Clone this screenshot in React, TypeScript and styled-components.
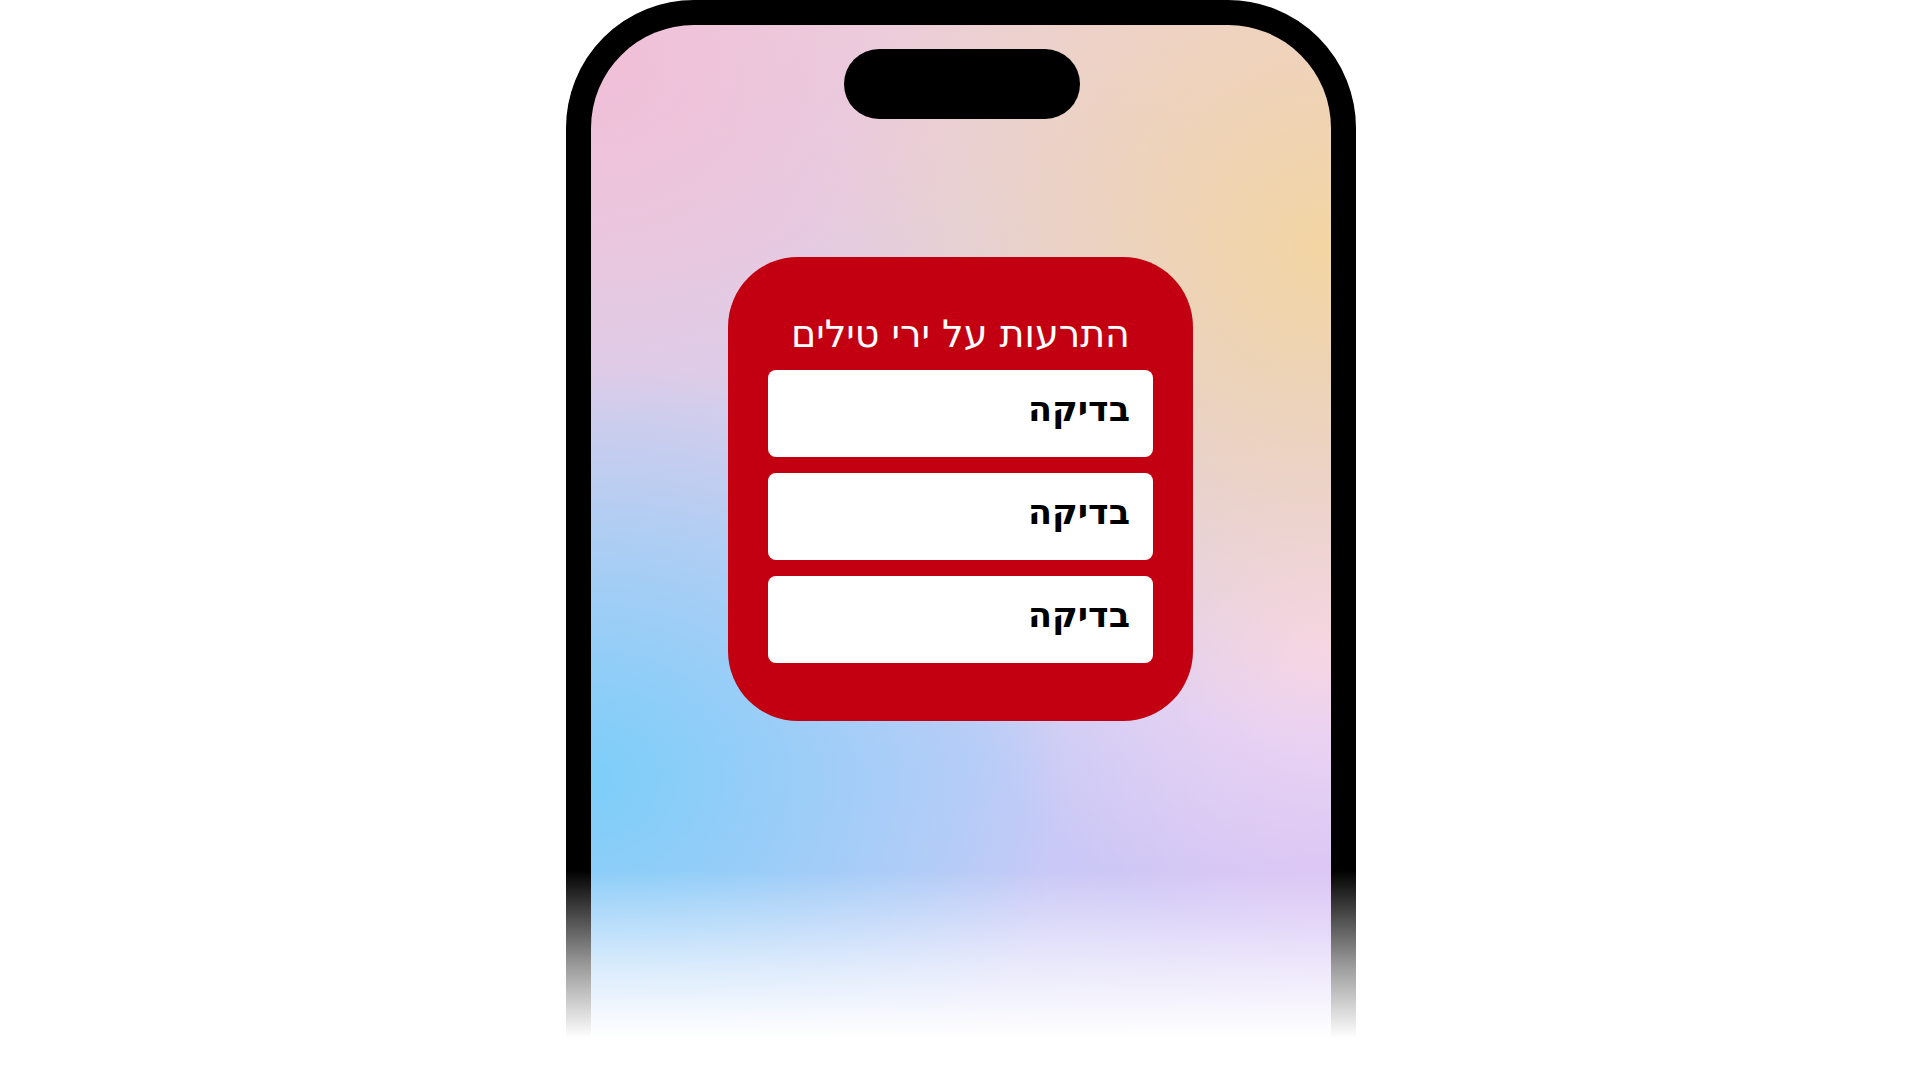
import React from "react";
import styled, { createGlobalStyle } from "styled-components";

const GlobalStyle = createGlobalStyle`
    html, body {
        margin: 0;
        padding: 0;
        height: 100%;
        overflow: hidden;
        background: #ffffff;
    }
    #root {
        height: 100%;
    }
`;

const alerts = ["בדיקה", "בדיקה", "בדיקה"];

const App: React.FC = () => {
    return (
        <>
            <GlobalStyle />
            <Page>
                <Phone>
                    <Screen>
                        <Island />
                        <AlertCard dir="rtl">
                            <Title>התרעות על ירי טילים</Title>
                            <AlertList>
                                {alerts.map((text, i) => (
                                    <AlertItem key={i}>{text}</AlertItem>
                                ))}
                            </AlertList>
                        </AlertCard>
                    </Screen>
                </Phone>
                <BottomFade />
            </Page>
        </>
    );
};

export default App;

const Page = styled.div`
    position: relative;
    height: 1080px;
    display: flex;
    justify-content: center;
    overflow: hidden;
    font-family: "DejaVu Sans", "Liberation Sans", sans-serif;
`;

const Phone = styled.div`
    flex: none;
    width: 790px;
    height: 1160px;
    margin-left: 1px;
    box-sizing: border-box;
    border: 25px solid #000;
    border-radius: 128px;
    background: #000;
`;

const Screen = styled.div`
    height: 100%;
    border-radius: 103px;
    display: flex;
    flex-direction: column;
    align-items: center;
    background:
        radial-gradient(70% 44% at 100% 20%, #f3d5a2 0%, rgba(243, 213, 162, 0) 100%),
        radial-gradient(55% 32% at 0% 4%, #f0bfd8 0%, rgba(240, 191, 216, 0) 100%),
        radial-gradient(64% 38% at 0% 68%, #7ccef9 0%, rgba(124, 206, 249, 0) 100%),
        radial-gradient(50% 26% at 100% 56%, #f8d6f0 0%, rgba(248, 214, 240, 0) 100%),
        radial-gradient(55% 28% at 100% 80%, #d6c1f5 0%, rgba(214, 193, 245, 0) 100%),
        linear-gradient(180deg, #ebd0de 0%, #d9cdec 38%, #c3cdf7 66%, #c6c8f6 100%);
`;

const Island = styled.div`
    width: 236px;
    height: 70px;
    margin-top: 24px;
    margin-left: 2px;
    border-radius: 35px;
    background: #000;
`;

const AlertCard = styled.section`
    width: 465px;
    margin-top: 138px;
    box-sizing: border-box;
    padding: 57px 40px 58px;
    border-radius: 70px;
    background: #c30011;
    display: flex;
    flex-direction: column;
    gap: 16px;
`;

const Title = styled.h1`
    margin: 0;
    font-size: 38px;
    font-weight: 400;
    line-height: 40px;
    color: #ffffff;
    text-align: center;
`;

const AlertList = styled.div`
    display: flex;
    flex-direction: column;
    gap: 16px;
`;

const AlertItem = styled.div`
    height: 87px;
    box-sizing: border-box;
    padding: 20px 23px 0;
    border-radius: 8px;
    background: #ffffff;
    color: #000000;
    font-size: 35px;
    font-weight: 700;
    line-height: 38px;
`;

const BottomFade = styled.div`
    position: absolute;
    left: 0;
    right: 0;
    top: 870px;
    bottom: 0;
    pointer-events: none;
    background: linear-gradient(180deg, rgba(255, 255, 255, 0) 0%, rgba(255, 255, 255, 0.6) 45%, #ffffff 80%);
`;
